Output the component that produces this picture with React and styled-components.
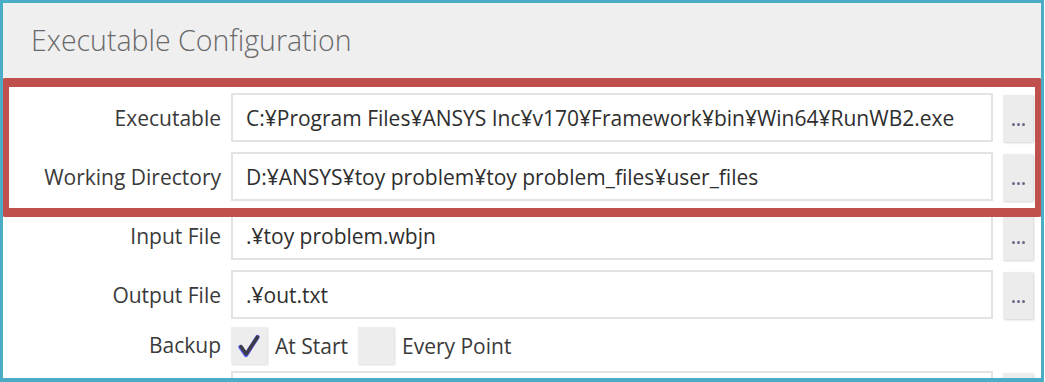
import React from "react";
import styled, { createGlobalStyle } from "styled-components";

const Global = createGlobalStyle`
  html, body { margin: 0; padding: 0; background: #ffffff; }
  body { font-family: "Open Sans", "Noto Sans", sans-serif; }
`;

const Frame = styled.div`
  position: relative;
  box-sizing: border-box;
  width: 1044px;
  height: 382px;
  border: 3px solid #4bacc6;
  border-bottom-width: 4px;
  overflow: hidden;
  background: #ffffff;
`;

const Header = styled.div`
  height: 75px;
  background: #efefef;
  display: flex;
  align-items: center;
  padding-left: 28px;
`;

const Title = styled.h1`
  margin: 0;
  font-weight: 300;
  font-size: 28.5px;
  color: #6a6a6a;
  letter-spacing: 0;
  padding-bottom: 2px;
`;

const Body = styled.div`
  display: grid;
  grid-template-columns: 218px 762px 30px;
  column-gap: 10px;
  row-gap: 10px;
  padding-top: 15px;
  align-items: center;
`;

const Label = styled.div`
  font-size: 21px;
  color: #3a3a3a;
  text-align: right;
`;

const Field = styled.div`
  box-sizing: border-box;
  height: 49px;
  border: 2px solid #e3e3e3;
  display: flex;
  align-items: center;
  padding-left: 13px;
  font-size: 21px;
  color: #2e2e2e;
  white-space: nowrap;
  overflow: hidden;
  align-self: ${(p) => (p.$top ? "start" : "center")};
`;

const Browse = styled.div`
  box-sizing: border-box;
  width: 30px;
  height: 47px;
  margin-top: 2px;
  background: #ececec;
  box-shadow: 1px 1px 2px rgba(0, 0, 0, 0.18);
  display: flex;
  justify-content: center;
  align-items: flex-end;
  padding-bottom: 16px;
  align-self: ${(p) => (p.$top ? "start" : "center")};
`;

const Dots = styled.span`
  display: flex;
  gap: 2px;
  span {
    width: 3px;
    height: 3px;
    background: #6a6a8a;
    border-radius: 50%;
  }
`;

const Checks = styled.div`
  display: flex;
  align-items: center;
  gap: 8px;
  height: 37px;
  margin-top: -2px;
  margin-bottom: -3px;
`;

const Box = styled.div`
  width: 36px;
  height: 37px;
  background: #ededed;
  box-shadow: 1px 1px 2px rgba(0, 0, 0, 0.15);
  display: flex;
  align-items: center;
  justify-content: center;
`;

const CheckText = styled.span`
  font-size: 21px;
  color: #3a3a3a;
  margin-right: 2px;
`;

const Highlight = styled.div`
  position: absolute;
  left: -3px;
  top: 75px;
  width: 1044px;
  height: 139px;
  box-sizing: border-box;
  border: 9px solid #c0504d;
  border-radius: 5px;
  pointer-events: none;
`;

const Tick = () => (
  <svg width="24" height="24" viewBox="0 0 24 24">
    <path d="M3.5 13 L9 21 L20.5 3" fill="none" stroke="#3a3aee" strokeWidth="4.2" strokeLinecap="round" strokeLinejoin="round" opacity="0.85" />
    <path d="M4 12.5 L9.2 20 L20.5 3" fill="none" stroke="#3c3c44" strokeWidth="3.2" strokeLinecap="round" strokeLinejoin="round" />
  </svg>
);

const rows = [
  ["Executable", "C:¥Program Files¥ANSYS Inc¥v170¥Framework¥bin¥Win64¥RunWB2.exe"],
  ["Working Directory", "D:¥ANSYS¥toy problem¥toy problem_files¥user_files"],
  ["Input File", ".¥toy problem.wbjn"],
  ["Output File", ".¥out.txt"],
];

const More = () => (
  <Dots>
    <span />
    <span />
    <span />
  </Dots>
);

export default function App() {
  return (
    <>
      <Global />
      <Frame>
        <Header>
          <Title>Executable Configuration</Title>
        </Header>
        <Body>
          {rows.map(([l, v]) => (
            <React.Fragment key={l}>
              <Label>{l}</Label>
              <Field>{v}</Field>
              <Browse>
                <More />
              </Browse>
            </React.Fragment>
          ))}
          <Label>Backup</Label>
          <Checks>
            <Box>
              <Tick />
            </Box>
            <CheckText>At Start</CheckText>
            <Box />
            <CheckText>Every Point</CheckText>
          </Checks>
          <div />
          <div />
          <Field $top />
          <Browse $top />
        </Body>
        <Highlight />
      </Frame>
    </>
  );
}
